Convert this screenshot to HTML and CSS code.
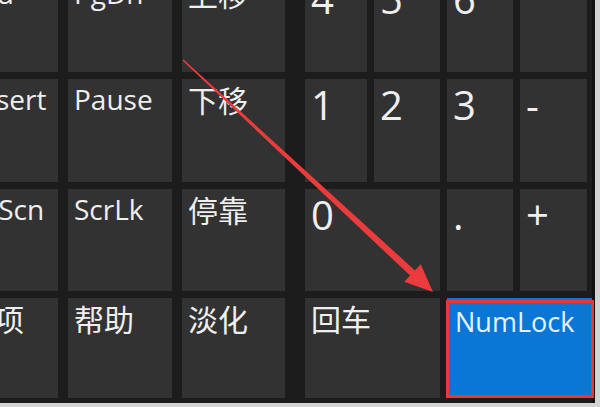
FILE: index.html
```html
<!DOCTYPE html>
<html lang="zh-CN">
<head>
<meta charset="utf-8">
<title>屏幕键盘</title>
<link rel="stylesheet" href="styles.css">
</head>
<body>
<div class="frame">
  <div class="board">
    <div class="main">
      <div class="key lat">End</div>
      <div class="key lat">PgDn</div>
      <div class="key cjk">上移</div>
      <div class="key lat shift">Insert</div>
      <div class="key lat">Pause</div>
      <div class="key cjk">下移</div>
      <div class="key lat pull">PrtScn</div>
      <div class="key lat">ScrLk</div>
      <div class="key cjk">停靠</div>
      <div class="key cjk">选项</div>
      <div class="key cjk">帮助</div>
      <div class="key cjk">淡化</div>
    </div>
    <div class="numpad">
      <div class="key num">4</div>
      <div class="key num">5</div>
      <div class="key num">6</div>
      <div class="key num"></div>
      <div class="key num">1</div>
      <div class="key num">2</div>
      <div class="key num">3</div>
      <div class="key num">-</div>
      <div class="key num span2">0</div>
      <div class="key num">.</div>
      <div class="key num">+</div>
      <div class="key cjk span2">回车</div>
      <div class="key lat span2 active">NumLock</div>
    </div>
  </div>
</div>
<svg class="annot" width="600" height="407" viewBox="0 0 600 407">
  <polygon points="182.5,60.6 410.1,275.6 404.3,281.8 433,292 420.7,264.2 414.9,270.4 183.5,59.4" fill="#ec3b3d"/>
  <rect x="447.5" y="301.5" width="145" height="95" fill="none" stroke="#ee3538" stroke-width="3"/>
</svg>
</body>
</html>
```
FILE: styles.css
```css
html, body {
  margin: 0;
  padding: 0;
}
body {
  width: 600px;
  height: 407px;
  background: #d3d3d3;
  overflow: hidden;
  position: relative;
}
.frame {
  width: 595px;
  height: 403px;
  background: #1c1c1c;
  overflow: hidden;
  border-right: 3px solid #121212;
  box-sizing: border-box;
}
.board {
  display: flex;
  gap: 20px;
  margin-left: -42px;
  margin-top: -27px;
}
.main {
  display: grid;
  grid-template-columns: 100px 104px 103px;
  grid-template-rows: 99px 103px 102px 100px;
  column-gap: 10px;
  row-gap: 7px;
}
.numpad {
  display: grid;
  grid-template-columns: 62px 66px 66px 67px;
  grid-template-rows: 99px 103px 102px 100px;
  gap: 7px;
}
.key {
  background: #323232;
  color: #efefef;
  padding: 6px 6px 0 6px;
  line-height: 1;
  white-space: nowrap;
  overflow: hidden;
}
.lat {
  font-family: "Open Sans", "Noto Sans", sans-serif;
  font-size: 28px;
}
.shift {
  padding-left: 13px;
}
.pull {
  padding-left: 2px;
}
.num {
  font-family: "Open Sans", "Noto Sans", sans-serif;
  font-size: 40px;
}
.cjk {
  font-family: "Noto Sans CJK SC", "Noto Sans", sans-serif;
  font-size: 30px;
  padding-top: 5px;
}
.span2 {
  grid-column: span 2;
}
.active {
  background: #0a77d7;
  color: #e6f1fb;
  margin-right: -5px;
  padding-top: 10px;
  padding-left: 8px;
  font-size: 27px;
}
.annot {
  position: absolute;
  left: 0;
  top: 0;
  pointer-events: none;
}
```
